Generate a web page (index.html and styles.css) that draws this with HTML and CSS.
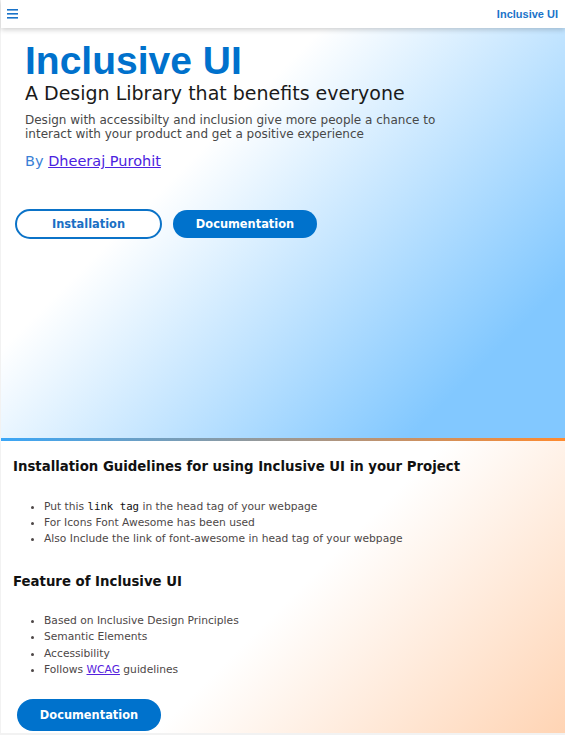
FILE: index.html
```html
<!DOCTYPE html>
<html lang="en">
<head>
<meta charset="utf-8">
<title>Inclusive UI</title>
<link rel="stylesheet" href="styles.css">
</head>
<body>
<div class="frame">
  <header class="navbar">
    <button class="menu" aria-label="Menu">
      <svg width="11" height="10" viewBox="0 0 11 10"><rect x="0" y="0" width="11" height="1.6" fill="#1a73c9"/><rect x="0" y="4" width="11" height="1.6" fill="#1a73c9"/><rect x="0" y="8" width="11" height="1.6" fill="#1a73c9"/></svg>
    </button>
    <a class="brand" href="#">Inclusive UI</a>
  </header>
  <main>
    <section class="hero">
      <h1 class="hero-title">Inclusive UI</h1>
      <p class="hero-sub">A Design Library that benefits everyone</p>
      <p class="hero-text">Design with accessibilty and inclusion give more people a chance to interact with your product and get a positive experience</p>
      <p class="hero-by">By <a href="#">Dheeraj Purohit</a></p>
      <div class="hero-actions">
        <a class="btn btn-outline" href="#">Installation</a>
        <a class="btn btn-solid" href="#">Documentation</a>
      </div>
    </section>
    <section class="info">
      <h2 class="info-title">Installation Guidelines for using Inclusive UI in your Project</h2>
      <ul class="info-list">
        <li>Put this <code>link tag</code> in the head tag of your webpage</li>
        <li>For Icons Font Awesome has been used</li>
        <li>Also Include the link of font-awesome in head tag of your webpage</li>
      </ul>
      <h2 class="info-title feature">Feature of Inclusive UI</h2>
      <ul class="info-list list-feature">
        <li>Based on Inclusive Design Principles</li>
        <li>Semantic Elements</li>
        <li>Accessibility</li>
        <li>Follows <a href="#">WCAG</a> guidelines</li>
      </ul>
      <a class="btn btn-solid btn-doc" href="#">Documentation</a>
    </section>
  </main>
</div>
</body>
</html>
```
FILE: styles.css
```css
* { box-sizing: border-box; }
html, body { margin: 0; padding: 0; }
body {
  background: #f2f2f2;
  font-family: "DejaVu Sans", "Noto Sans", sans-serif;
  color: #222;
}
.frame {
  margin: 0 0 2px 1px;
  background: #fff;
  min-height: 733px;
}
.navbar {
  height: 28px;
  display: flex;
  align-items: center;
  justify-content: space-between;
  padding: 0 7px 0 6px;
  background: #fff;
  box-shadow: 0 2px 5px rgba(0,0,0,0.18);
  position: relative;
  z-index: 1;
}
.menu {
  border: 0;
  background: none;
  padding: 0;
  display: flex;
  width: 12px;
  height: 12px;
  align-items: center;
}
.brand {
  color: #1a73c9;
  font-family: "Liberation Sans", Arial, sans-serif;
  font-weight: bold;
  font-size: 11px;
  text-decoration: none;
}
.hero {
  height: 413px;
  padding: 13px 0 0 24px;
  background: linear-gradient(135deg, #ffffff 33%, #82c8ff 84%);
  border-bottom: 3px solid transparent;
  border-image: linear-gradient(90deg, #3aa6f7, #ff8a2e) 1;
}
.hero-title {
  margin: 0;
  font-family: "Liberation Sans", Arial, sans-serif;
  font-size: 39px;
  line-height: 40px;
  color: #0071cc;
  font-weight: bold;
}
.hero-sub {
  margin: 0;
  font-size: 19px;
  line-height: 24px;
  color: #1a1a1a;
}
.hero-text {
  margin: 8px 0 0;
  font-size: 12px;
  line-height: 14px;
  color: #484848;
  max-width: 430px;
}
.hero-by {
  margin: 12px 0 0;
  font-size: 14.5px;
  color: #3a7fd6;
}
.hero-by a { color: #4b22e0; }
.hero-actions {
  display: flex;
  gap: 11px;
  margin: 40px 0 0 -10px;
}
.btn {
  display: inline-flex;
  align-items: center;
  justify-content: center;
  border-radius: 16px;
  font-weight: bold;
  font-size: 11.4px;
  text-decoration: none;
}
.btn-outline {
  width: 147px;
  height: 30px;
  border: 2px solid #0b73c8;
  background: #fff;
  color: #1a6fc4;
}
.btn-solid {
  width: 144px;
  height: 28px;
  margin-top: 1px;
  background: #0072cc;
  color: #fff;
}
.info {
  padding: 16px 13px 0 12px;
  height: 292px;
  background: linear-gradient(135deg, #ffffff 52%, #ffd4b4 100%);
}
.info-title {
  margin: 0;
  font-size: 13.3px;
  line-height: 20px;
  color: #111;
}
.info-title.feature { margin-top: 25px; }
.info-list {
  margin: 22px 0 0;
  padding-left: 31px;
  font-size: 10.7px;
  line-height: 16px;
  color: #4d4747;
}
.info-list.list-feature {
  margin-top: 21px;
  line-height: 16.3px;
}
.info-list code {
  font-family: "DejaVu Sans Mono", monospace;
  color: #111;
  font-size: 10.7px;
}
.info-list a { color: #5522dd; }
.btn-doc {
  margin: 21px 0 0 4px;
  width: 144px;
  height: 32px;
}
```
